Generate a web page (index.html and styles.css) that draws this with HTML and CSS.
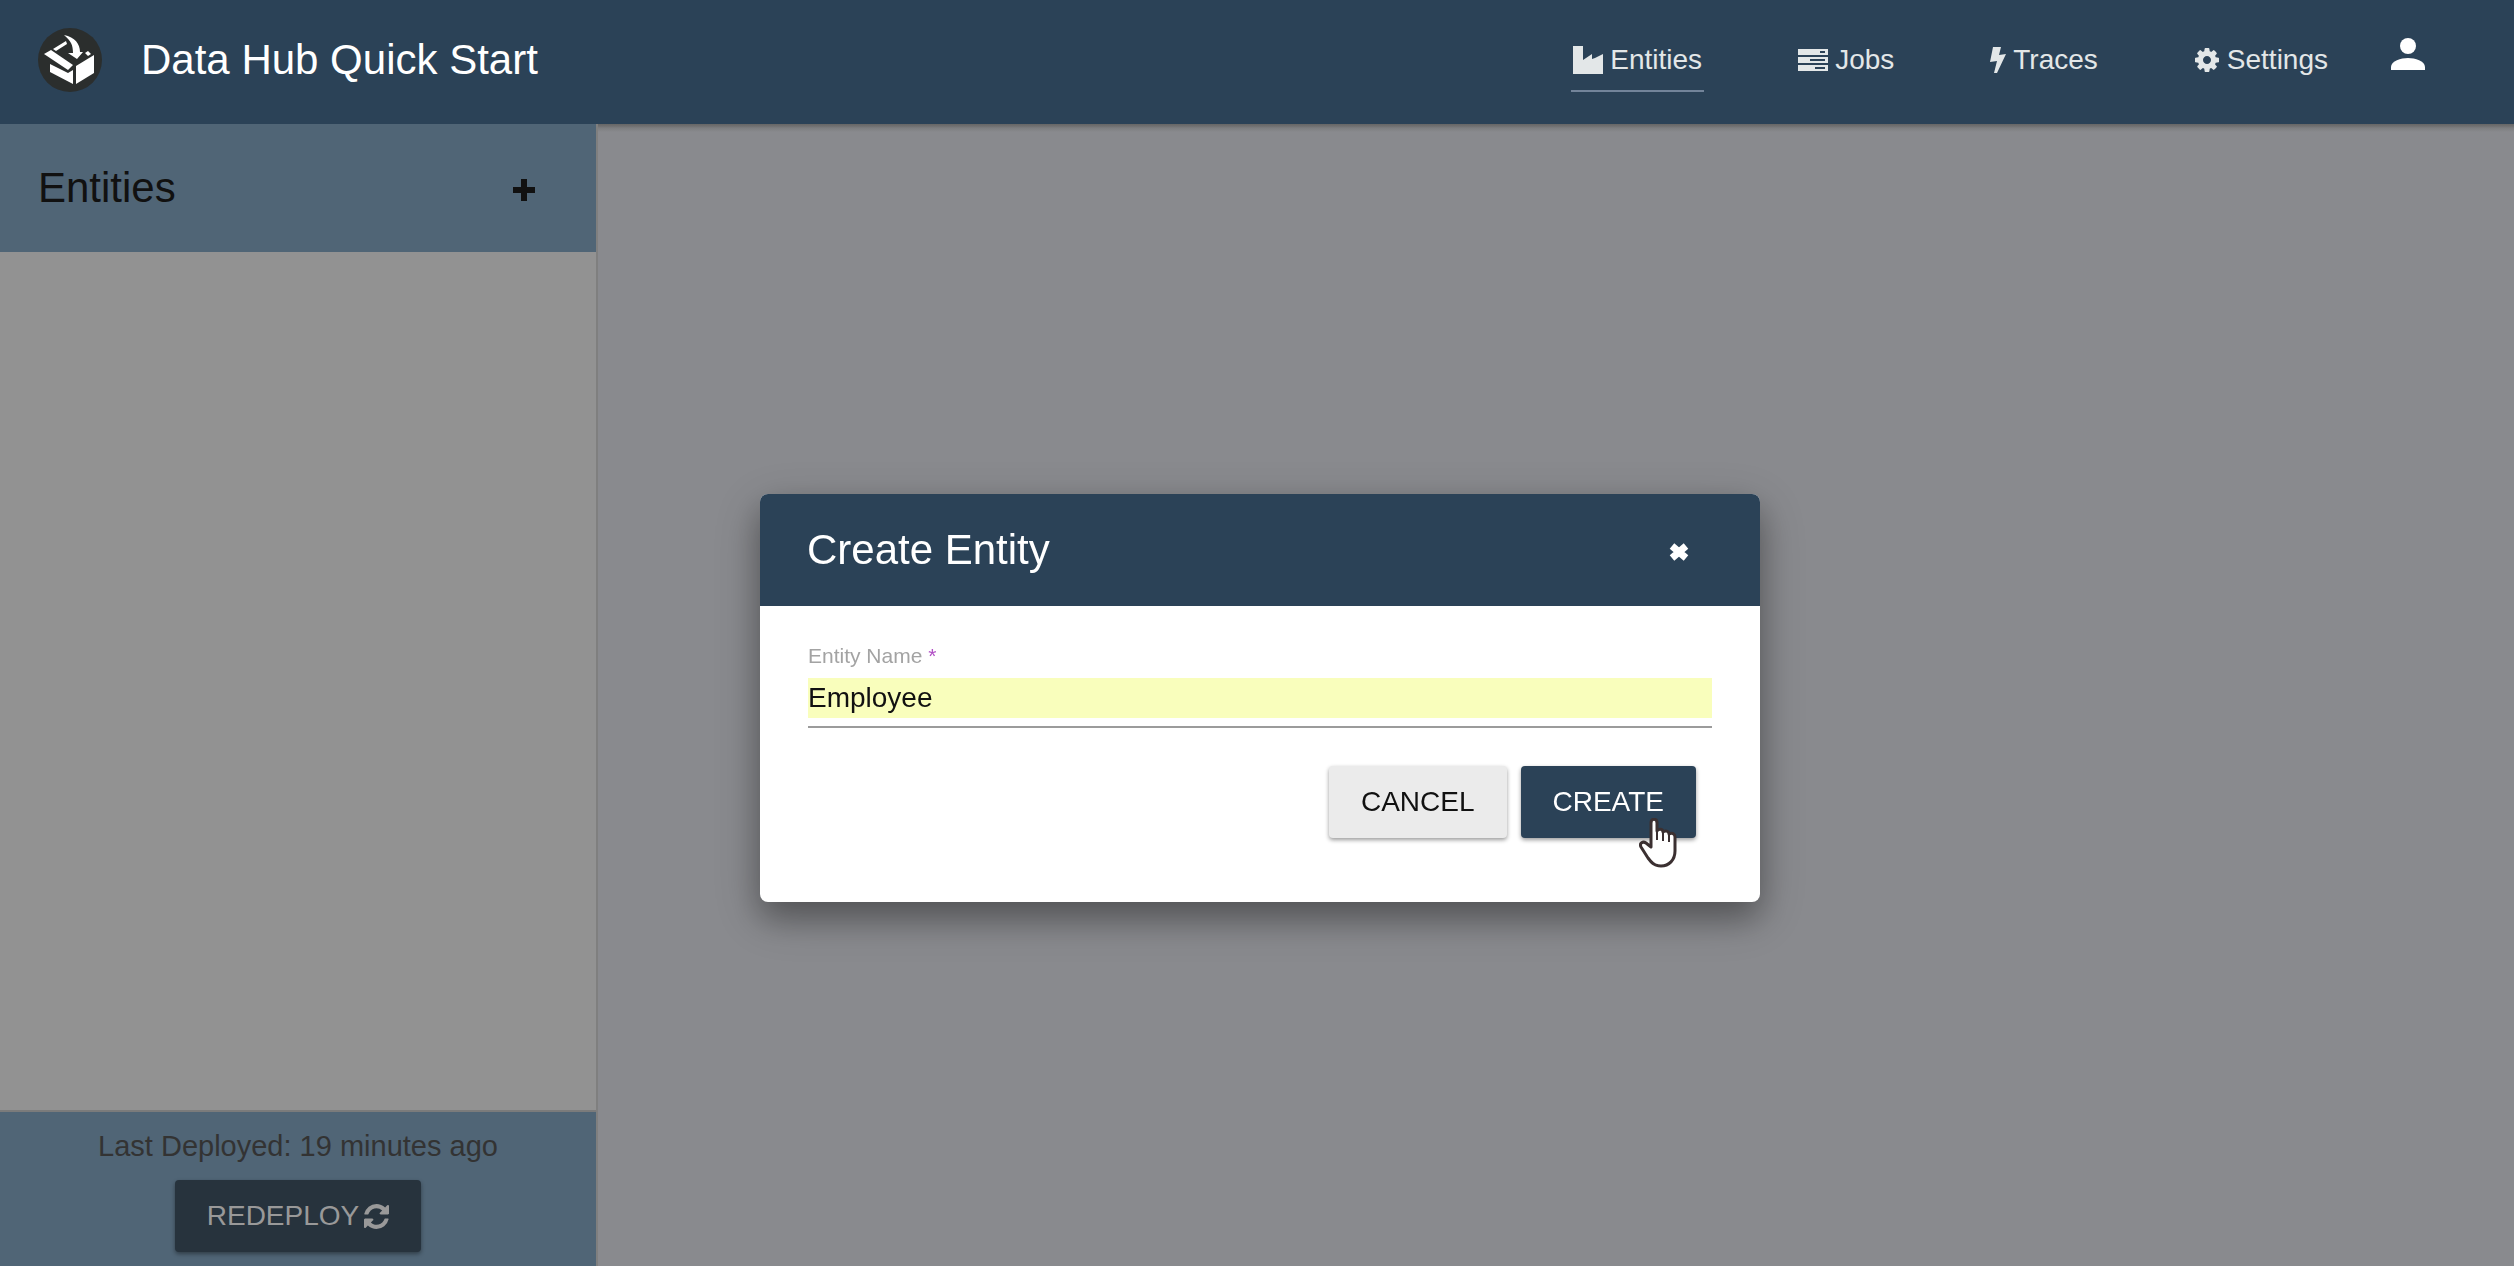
FILE: index.html
```html
<!DOCTYPE html>
<html lang="en">
<head>
<meta charset="utf-8">
<title>Data Hub Quick Start</title>
<link rel="stylesheet" href="styles.css">
</head>
<body>
<div class="app">
  <header class="toolbar">
    <svg class="logo" viewBox="0 0 64 64" aria-hidden="true">
      <circle cx="32" cy="32" r="32" fill="#2b2e2d"/>
      <g fill="#fff">
        <path d="M6 26l7-4 22 15-5 5z"/>
        <path d="M12 36l18 9 5-3v14L12 44z"/>
        <path d="M38 38l18-11v18L38 56z"/>
        <path d="M15 21l13-8 1 3-11 7z"/>
        <path d="M26 7c11 2 16 9 16 17h3l-6 7-9-6h5c0-8-2-12-9-18z"/>
        <path d="M47 25l3-2 3 3-3 2z"/>
      </g>
    </svg>
    <h1 class="brand">Data Hub Quick Start</h1>
    <nav class="nav">
      <a class="nav-link active" href="#entities">
        <svg width="30" height="28" viewBox="0 0 30 28" aria-hidden="true"><path d="M0 0h10v14l9-6v5l3-1 8-4v20H0z"/></svg>
        <span>Entities</span>
      </a>
      <a class="nav-link" href="#jobs">
        <svg width="30" height="22" viewBox="0 0 30 22" aria-hidden="true"><path fill-rule="evenodd" d="M0 0h30v6H0zM22 2v2h5V2zM0 8h30v6H0zM12 10v2h15v-2zM0 16h30v6H0zM17 18v2h10v-2z"/></svg>
        <span>Jobs</span>
      </a>
      <a class="nav-link" href="#traces">
        <svg width="16" height="26" viewBox="0 0 16 26" aria-hidden="true"><path d="M3 0h8L9 8l7-1L7 26H4l3-12-7 1z"/></svg>
        <span>Traces</span>
      </a>
      <a class="nav-link" href="#settings">
        <svg width="26" height="24" viewBox="0 0 1536 1536" aria-hidden="true"><path d="M1024 768q0-106-75-181t-181-75-181 75-75 181 75 181 181 75 181-75 75-181zm512-109v222q0 12-8 23t-20 13l-185 28q-19 54-39 91 35 50 107 138 10 12 10 25t-9 23q-27 37-99 108t-94 71q-12 0-26-9l-138-108q-44 23-91 38-16 136-29 186-7 28-36 28H657q-14 0-24.500-8.500T621 1506l-28-184q-49-16-90-37l-141 107q-10 9-25 9-14 0-25-11-126-114-165-168-7-10-7-23 0-12 8-23 15-21 51-66.500t54-70.500q-27-50-41-99L29 913q-13-2-21-12.500T0 877V655q0-12 8-23t19-13l186-28q14-46 39-92-40-57-107-138-10-12-10-24 0-10 9-23 26-36 98.500-107.500T337 135q13 0 26 10l138 107q44-23 91-38 16-136 29-186 7-28 36-28h222q14 0 24.500 8.500T915 30l28 184q49 16 90 37l142-107q9-9 24-9 13 0 25 10 129 119 165 170 7 8 7 22 0 12-8 23-15 21-51 66.500t-54 70.500q26 50 41 98l183 28q13 2 21 12.500t8 23.500z"/></svg>
        <span>Settings</span>
      </a>
    </nav>
    <button class="icon-button user" type="button" aria-label="User menu">
      <svg width="34" height="32" viewBox="0 0 34 32" aria-hidden="true"><circle cx="17" cy="8" r="8"/><path d="M0 32v-3c0-6 10-9 17-9s17 3 17 9v3z"/></svg>
    </button>
  </header>

  <div class="workspace">
    <aside class="sidebar">
      <div class="sidebar-header">
        <h2 class="sidebar-title">Entities</h2>
        <button class="icon-button add" type="button" aria-label="Add entity">
          <svg width="22" height="22" viewBox="0 0 22 22" aria-hidden="true"><path d="M8 0h6v8h8v6h-8v8H8v-8H0V8h8z"/></svg>
        </button>
      </div>
      <div class="entity-list"></div>
      <div class="deploy">
        <p class="deploy-time">Last Deployed: 19 minutes ago</p>
        <button class="button redeploy" type="button">
          <span>REDEPLOY</span>
          <svg width="25" height="25" viewBox="0 0 1536 1536" aria-hidden="true"><path d="M1511 928q0 5-1 7-64 268-268 434.500T764 1536q-146 0-282.500-55T238 1324l-129 129q-19 19-45 19t-45-19-19-45V960q0-26 19-45t45-19h448q26 0 45 19t19 45-19 45l-137 137q71 66 161 102t187 36q134 0 250-65t186-179q11-17 53-117 8-23 30-23h192q13 0 22.500 9.500t9.500 22.500zm25-800v448q0 26-19 45t-45 19h-448q-26 0-45-19t-19-45 19-45l138-138Q969 256 768 256q-134 0-250 65T332 500q-11 17-53 117-8 23-30 23H50q-13 0-22.500-9.500T18 608v-7q65-268 270-434.500T768 0q146 0 284 55.500T1297 212l130-129q19-19 45-19t45 19 19 45z"/></svg>
        </button>
      </div>
    </aside>
    <main class="content"></main>
  </div>
</div>

<div class="overlay">
  <form class="dialog" role="dialog" aria-labelledby="dialog-title">
    <div class="dialog-header">
      <h2 class="dialog-title" id="dialog-title">Create Entity</h2>
      <button class="icon-button close" type="button" aria-label="Close">
        <svg width="22" height="20" viewBox="0 0 22 20" aria-hidden="true"><path d="M4 4l14 12M18 4L4 16" stroke="#fff" stroke-width="7"/></svg>
      </button>
    </div>
    <div class="dialog-body">
      <label class="field-label" for="entity-name">Entity Name <span class="required">*</span></label>
      <div class="field"><input class="field-input" id="entity-name" type="text" value="Employee" required></div>
      <div class="actions">
        <button class="button cancel" type="button">CANCEL</button>
        <button class="button create" type="submit">CREATE
          <svg class="pointer" width="38" height="50" viewBox="0 0 38 50" aria-hidden="true"><path d="M12 29V5c0-5 6-5 6 0v8c2-3 6-2 6 1 2-2 6-1 6 2 3-2 6 0 6 3v14c0 9-6 15-14 15-7 0-10-4-13-8L2 29c-2-4 2-6 5-4z" fill="#fff" stroke="#3b3031" stroke-width="3" stroke-linejoin="round"/><path d="M18 13v9M24 14v9M30 16v8" fill="none" stroke="#3b3031" stroke-width="2"/></svg>
        </button>
      </div>
    </div>
  </form>
</div>
</body>
</html>
```

FILE: styles.css
```css
* {
  box-sizing: border-box;
}

body {
  margin: 0;
  font-family: "Liberation Sans", Arial, sans-serif;
  font-size: 28px;
  line-height: 32px;
}

h1,
h2,
p {
  margin: 0;
  font-weight: 400;
}

svg {
  display: block;
  flex: none;
}

button {
  font: inherit;
  border: 0;
  cursor: pointer;
}

.app {
  display: flex;
  flex-direction: column;
  min-height: 100vh;
}

/* Top toolbar */
.toolbar {
  display: flex;
  align-items: center;
  height: 124px;
  padding: 0 89px 4px 38px;
  background: #2b4257;
  color: #fff;
}

.logo {
  width: 64px;
  height: 64px;
}

.brand {
  margin-left: 39px;
  font-size: 42px;
  line-height: 48px;
}

.nav {
  display: flex;
  gap: 92px;
  margin-left: auto;
}

.nav-link {
  display: flex;
  align-items: center;
  gap: 7px;
  height: 64px;
  padding: 2px 2px 0;
  border-bottom: 2px solid transparent;
  color: #e3e7e8;
  text-decoration: none;
}

.nav-link.active {
  border-bottom-color: #73849a;
}

.nav-link svg,
.icon-button svg,
.redeploy svg {
  fill: currentColor;
}

.icon-button {
  padding: 0;
  background: none;
  color: inherit;
}

.user {
  margin: 0 0 12px 61px;
}

/* Sidebar and content */
.workspace {
  display: flex;
  flex: 1;
}

.sidebar {
  display: flex;
  flex-direction: column;
  width: 598px;
  border-right: 2px solid #7f7f7f;
  background: #929292;
}

.sidebar-header {
  display: flex;
  align-items: center;
  justify-content: space-between;
  height: 128px;
  padding: 0 61px 0 38px;
  background: #506576;
  color: #111;
}

.sidebar-title {
  font-size: 42px;
  line-height: 48px;
}

.add,
.close {
  padding-top: 4px;
}

.entity-list {
  flex: 1;
}

.deploy {
  display: flex;
  flex-direction: column;
  align-items: center;
  gap: 18px;
  padding: 18px 0 14px;
  border-top: 2px solid #7b7b7b;
  background: #506576;
  color: #333;
}

.deploy-time {
  font-size: 29px;
}

.content {
  flex: 1;
  background: #898a8e linear-gradient(#666, #6f6f70 2px, #7d7e80 4px, #898a8e 8px) no-repeat top / 100% 8px;
}

/* Buttons */
.button {
  display: flex;
  align-items: center;
  height: 72px;
  padding: 0 32px;
  border-radius: 4px;
  box-shadow: 0 2px 4px rgba(0, 0, 0, 0.4);
}

.redeploy {
  gap: 5px;
  background: #27333d;
  color: #999;
}

.cancel {
  background: #ebebeb;
  color: #111;
}

.create {
  position: relative;
  background: #2b4257;
  color: #fff;
}

/* Dialog */
.overlay {
  position: fixed;
  inset: 0;
  display: grid;
  place-items: center;
  padding: 130px 0 0 6px;
}

.dialog {
  width: 1000px;
  border-radius: 8px;
  background: #fff;
  box-shadow: 0 14px 48px rgba(0, 0, 0, 0.2), 0 16px 32px rgba(0, 0, 0, 0.28);
}

.dialog-header {
  display: flex;
  align-items: center;
  justify-content: space-between;
  height: 112px;
  padding: 0 70px 0 47px;
  border-radius: 8px 8px 0 0;
  background: #2b4257;
  color: #fff;
}

.dialog-title {
  font-size: 42px;
  line-height: 48px;
}

.dialog-body {
  padding: 38px 48px 64px;
}

.field-label {
  display: block;
  font-size: 21px;
  line-height: 24px;
  color: #a3a3a3;
}

.required {
  color: #b14fc5;
}

.field {
  margin-top: 10px;
  padding-bottom: 8px;
  border-bottom: 2px solid #9b9b9b;
}

.field-input {
  display: block;
  width: 100%;
  height: 40px;
  padding: 0;
  border: 0;
  outline: 0;
  background: #f9febc;
  color: #111;
  font: inherit;
}

.actions {
  display: flex;
  justify-content: flex-end;
  gap: 14px;
  margin-top: 38px;
  padding-right: 16px;
}

.pointer {
  position: absolute;
  left: 118px;
  top: 52px;
}
```
